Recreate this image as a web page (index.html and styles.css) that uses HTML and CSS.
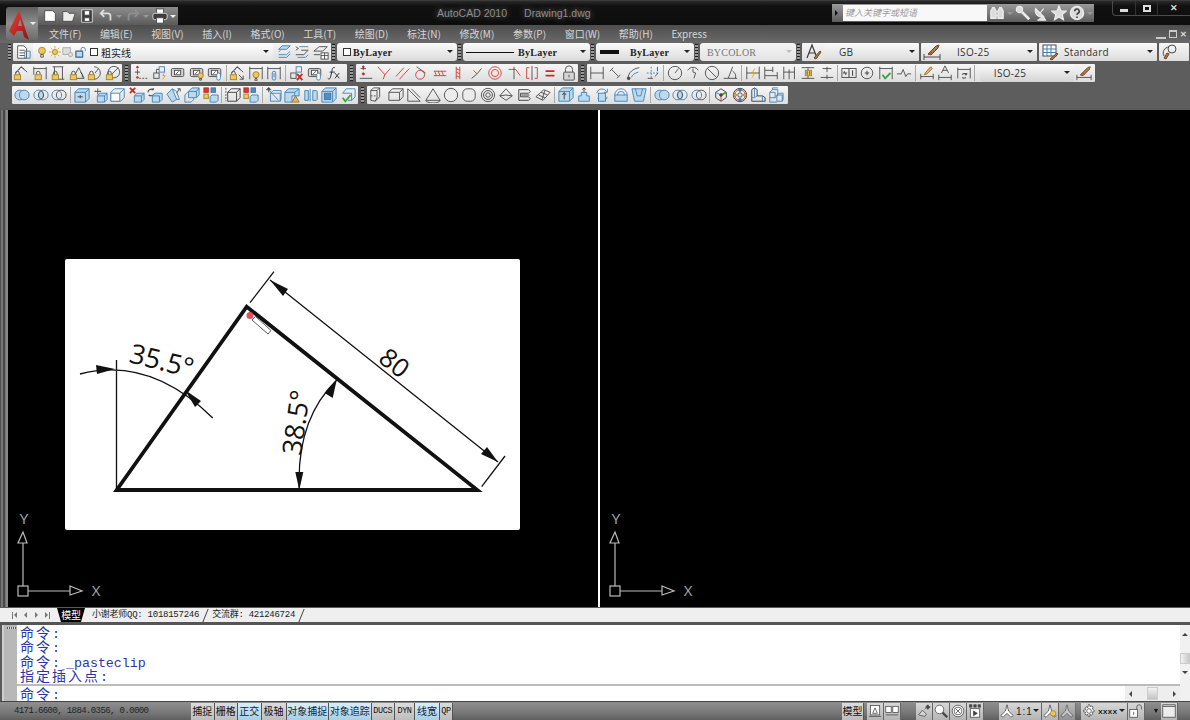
FILE: index.html
```html
<!DOCTYPE html>
<html lang="zh">
<head>
<meta charset="utf-8">
<title>AutoCAD 2010 - Drawing1.dwg</title>
<link rel="stylesheet" href="styles.css">
</head>
<body>
<svg class="defs" aria-hidden="true">
<defs><linearGradient id="redA" x1="0" y1="0" x2="1" y2="1"><stop offset="0" stop-color="#e8443a"/><stop offset="1" stop-color="#8f1512"/></linearGradient></defs>
<symbol id="lk" viewBox="0 0 18 18"><path d="M3 11V9a2 2 0 0 1 4 0v2"/><rect class="fy" x="1.5" y="11" width="7" height="5.5"/></symbol>
<symbol id="bulb" viewBox="0 0 18 18"><circle class="fy" cx="11" cy="10" r="3.5"/><path d="M10 14h2v3h-2z"/></symbol>
<symbol id="clip" viewBox="0 0 18 18"><rect class="bl" x="9" y="7" width="4" height="10" rx="2"/><path class="bl" d="M11 9v5"/></symbol>
<symbol id="dl" viewBox="0 0 18 18"><path d="M3 9 9 2l7 6M6 6l3-4 4 3"/><use href="#lk"/></symbol>
<symbol id="dh" viewBox="0 0 18 18"><path d="M2 2v9M16 2v14M2 4h14"/><use href="#lk" x="2"/></symbol>
<symbol id="dv" viewBox="0 0 18 18"><path d="M3 2h12M9 16h7M5 2v14"/><path d="M14 2v14"/><use href="#lk" x="1"/></symbol>
<symbol id="da" viewBox="0 0 18 18"><path d="M5 14 11 3l6 12H9M13 8a6 6 0 0 1 2 6"/><use href="#lk"/></symbol>
<symbol id="dr" viewBox="0 0 18 18"><path d="M8 2a7 7 0 1 1 0 14M9 9l4-5"/><use href="#lk"/></symbol>
<symbol id="dd" viewBox="0 0 18 18"><circle cx="10" cy="8" r="6.5"/><path d="m5 13 10-10"/><use href="#lk"/></symbol>
<symbol id="ord" viewBox="0 0 18 18"><circle class="fr" cx="5" cy="2.5" r="1"/><circle class="fr" cx="5" cy="14" r="1"/><path d="M5 5v6M2 8h6"/><path class="dash" d="M7 15h9"/></symbol>
<symbol id="blk" viewBox="0 0 18 18"><rect class="bl" x="8" y="2" width="6" height="6"/><rect x="2" y="9" width="6" height="6"/><path d="M8 5H5v4"/><path class="sy" d="m14 9-2 3h3l-3 4"/></symbol>
<symbol id="par" viewBox="0 0 18 18"><rect x="1.5" y="4" width="14" height="9" rx="1.5" class="fg"/><rect x="5" y="6" width="7" height="5" class="fw"/><path d="m7 10 3-3"/></symbol>
<symbol id="parb" viewBox="0 0 18 18"><use href="#par"/><circle class="fy" cx="13" cy="12" r="3"/><path d="M12 15h2v2h-2z"/></symbol>
<symbol id="parc" viewBox="0 0 18 18"><use href="#par"/><rect class="bl fw" x="11" y="9" width="4" height="8" rx="2"/></symbol>
<symbol id="dla" viewBox="0 0 18 18"><path d="M3 9 9 2l7 6M6 6l3-4 4 3M11 11l5 5M16 12v4h-4"/><use href="#lk"/></symbol>
<symbol id="dhb" viewBox="0 0 18 18"><path d="M2 2v14M16 2v14M2 4h14"/><use href="#bulb" x="-2" y="1"/></symbol>
<symbol id="dhc" viewBox="0 0 18 18"><path d="M2 2v14M16 2v14M2 4h14"/><use href="#clip" x="-2"/></symbol>
<symbol id="blx" viewBox="0 0 18 18"><rect class="bl" x="8" y="2" width="6" height="6"/><rect x="2" y="9" width="6" height="6"/><path class="r2" d="m9 10 6 7M15 10l-6 7"/></symbol>
<symbol id="fx" viewBox="0 0 18 18"><path d="M10 3C7 2 7 5 6.500 8L5 14c-.5 2-2 2-3 1M4 8h6M10 9l5 6M15 9l-5 6" class="th"/></symbol>
<symbol id="cpt" viewBox="0 0 18 18"><path d="M6 1v5M3 4h6M2 15h14"/><circle class="fr" cx="6" cy="2" r="1"/><circle class="fr" cx="6" cy="10" r="1.200"/></symbol>
<symbol id="cper" viewBox="0 0 18 18"><path class="r1" d="m2 2 8 9 6-7M10 11l-2 5"/></symbol>
<symbol id="cpar" viewBox="0 0 18 18"><path class="r1" d="m1 13 9-10M5 16l11-12"/></symbol>
<symbol id="ctan" viewBox="0 0 18 18"><circle class="r1" cx="8" cy="11" r="5"/><path d="m4 2 10 7"/></symbol>
<symbol id="chor" viewBox="0 0 18 18"><path class="r1" d="M2 7h14M2 12h14M3 7l2 5M7 7l2 5M11 7l2 5"/></symbol>
<symbol id="cver" viewBox="0 0 18 18"><path class="r1" d="M7 2v14M11 2v14M7 4l4 2M7 8l4 2M7 12l4 2"/></symbol>
<symbol id="ccol" viewBox="0 0 18 18"><path d="m3 15 6-5M14 4l-5 6"/><path class="r1" d="M5 6l4 4"/></symbol>
<symbol id="ccon" viewBox="0 0 18 18"><circle class="r1" cx="9" cy="9" r="7"/><circle class="r1" cx="9" cy="9" r="4"/></symbol>
<symbol id="ctrm" viewBox="0 0 18 18"><path class="r1" d="M3 5h8l5 7"/><path d="M9 2v8M9 10v6"/></symbol>
<symbol id="csym" viewBox="0 0 18 18"><path class="r1" d="M6 3H3v12h3M12 3h3v12h-3"/><path d="M9 1v16"/></symbol>
<symbol id="ceq" viewBox="0 0 18 18"><path class="r2" d="M4 7h10M4 12h10"/></symbol>
<symbol id="lock" viewBox="0 0 18 18"><path d="M5 8V5a4 4 0 0 1 8 0v3"/><rect class="fg" x="3" y="8" width="12" height="9" rx="1"/><path d="M9 11v3"/></symbol>
<symbol id="dlin" viewBox="0 0 18 18"><path d="M2 2v14M16 2v14M2 9h14"/></symbol>
<symbol id="dali" viewBox="0 0 18 18"><path d="m2 7 4-4M10 15l4-4M4 5l8 8"/></symbol>
<symbol id="darc" viewBox="0 0 18 18"><path d="M2 15C3 8 8 4 15 3"/><path class="bl" d="M6 14c1-3 4-5 8-6"/><circle class="fk" cx="3" cy="15" r="1.500"/></symbol>
<symbol id="dord" viewBox="0 0 18 18"><path class="dash bl" d="M7 2v14M2 9h14"/><path d="M3 15h6M14 2v5M11 13l4-4"/></symbol>
<symbol id="drad" viewBox="0 0 18 18"><circle cx="9" cy="9" r="7.500"/><path d="m9 9 4-5"/></symbol>
<symbol id="djog" viewBox="0 0 18 18"><path d="M3 6a7 7 0 0 1 12 0M9 4v4l3 1-2 6"/></symbol>
<symbol id="ddia" viewBox="0 0 18 18"><circle cx="9" cy="9" r="7.500"/><path d="m4 4 10 10"/></symbol>
<symbol id="dang" viewBox="0 0 18 18"><path d="M2 15h15M7 15 12 2M12 7a7 7 0 0 1 3 8"/></symbol>
<symbol id="dq" viewBox="0 0 18 18"><path d="M2 2v14M16 2v14M2 9h14"/><path class="sy" d="m11 4-3 5h3l-3 5"/></symbol>
<symbol id="dbas" viewBox="0 0 18 18"><path d="M2 2v14M2 6h9M11 2v6M2 12h14M16 8v8"/></symbol>
<symbol id="dcon" viewBox="0 0 18 18"><path d="M2 2v14M8 5v11M14 2v14M2 8h12"/></symbol>
<symbol id="dsp" viewBox="0 0 18 18"><path d="M2 3h14M2 15h14M9 3v12"/><rect class="fy" x="6" y="6" width="7" height="6"/><path d="M8 7v4M11 7v4"/></symbol>
<symbol id="dbr" viewBox="0 0 18 18"><path d="M2 14h14M9 2v6M9 11v5M4 4h10"/></symbol>
<symbol id="mk1" viewBox="0 0 18 18"><rect x="1" y="4" width="16" height="10"/><path d="M9 4v10M4 7l-1 2h3l-1 2M5 9h0M13 6v6" class="tk"/></symbol>
<symbol id="cen" viewBox="0 0 18 18"><circle cx="9" cy="9" r="6.500"/><path class="tk" d="M9 6.500v5M6.500 9h5"/></symbol>
<symbol id="chk" viewBox="0 0 18 18"><path d="M2 2v14M16 2v14M2 4h14"/><path class="gr" d="m5 11 3 4 6-6"/></symbol>
<symbol id="djg" viewBox="0 0 18 18"><path d="M1 10h5l2-5 3 8 2-3h4"/></symbol>
<symbol id="ded" viewBox="0 0 18 18"><path d="M2 10v6M16 10v6M2 13h14"/><path class="sb2" d="m7 9 6-7 2 2-6 6-3 1z"/></symbol>
<symbol id="dta" viewBox="0 0 18 18"><path d="M2 11v6M16 11v6M2 14h14M5 9l4-8 4 8M6.500 6h5"/></symbol>
<symbol id="dup" viewBox="0 0 18 18"><path d="M2 3v12M16 3v12M2 5h14"/><path class="tk" d="M7 11a3 3 0 0 1 5 0M12 11v-2M12 11h-2M11 14a3 3 0 0 1-4 0"/></symbol>
<symbol id="dst" viewBox="0 0 18 18"><path d="M1 11v6M17 11v6M1 14h16"/><path class="sb" d="m5 11 8-8 3-1-1 3-7 7z"/><path class="r1" d="M5 12l4-3"/></symbol>
<symbol id="ast" viewBox="0 0 18 18"><path class="dk2 tk" d="M3 15 8 2l5 13M5 10h6"/><path class="sb" d="m10 15 6-7 1 1-5 7z"/></symbol>
<symbol id="tst" viewBox="0 0 18 18"><rect x="2" y="2" width="13" height="11" class="fw"/><path d="M2 6h13M2 9.500h13M6 2v11M10 2v11" class="bl"/><path class="sb" d="m9 16 7-6 1 1-6 6z"/></symbol>
<symbol id="mls" viewBox="0 0 18 18"><path d="M3 13a6 6 0 0 1 5-9"/><circle cx="11" cy="6" r="4"/><path class="bl" d="m8 10-3 5"/><path class="sb" d="m3 15 3-5 2 1-3 5z"/></symbol>
<symbol id="ly2" viewBox="0 0 18 18"><path class="bl fb" d="m3 6 4-4h9l-4 4z"/><path class="bl" d="m3 9 2-2M3 12h9l4-4M3 15h9l4-4"/></symbol>
<symbol id="ly3" viewBox="0 0 18 18"><path d="m2 3 3 2-3 2M2 12h9l5-5H8"/><path class="bl" d="M6 3h10M4 15h9l3-3"/></symbol>
<symbol id="ly4" viewBox="0 0 18 18"><path d="m1 8 6-5h9l-5 5zM1 12h7"/><rect x="9" y="10" width="8" height="7" class="fw"/><path d="M13 10v7M9 13h8"/></symbol>
<symbol id="v1" viewBox="0 0 18 18"><circle class="bl fb" cx="6.500" cy="9" r="5.500"/><circle class="bl fb" cx="11.500" cy="9" r="5.500"/></symbol>
<symbol id="v2" viewBox="0 0 18 18"><circle class="bl" cx="6.500" cy="9" r="5.500"/><circle class="bl" cx="11.500" cy="9" r="5.500"/><path class="fb" d="M9 4.200a5.500 5.500 0 0 1 0 9.600 5.500 5.500 0 0 1 0-9.600z"/></symbol>
<symbol id="v3" viewBox="0 0 18 18"><circle class="bl" cx="6.500" cy="9" r="5.500"/><circle cx="11.500" cy="9" r="5.500"/></symbol>
<symbol id="b1" viewBox="0 0 18 18"><path class="bl fb" d="m1 6 4-4h12v11l-4 4H1z"/><path class="bl" d="M1 6h12l4-4M13 6v11"/><path d="M4 11h6M7 9v4"/></symbol>
<symbol id="b2" viewBox="0 0 18 18"><path d="M3 5h7M6.500 1.500v7M3 5l1-1M10 5 9 4"/><path class="bl fb" d="m6 10 3-3h8v7l-3 3H6z"/><path class="bl" d="M6 10h8v7M14 10l3-3"/></symbol>
<symbol id="b3" viewBox="0 0 18 18"><path class="bl" d="m1 6 4-4h11v10l-4 4H1z"/><path class="bl fw" d="M1 7h10v9H1z"/><path class="bl" d="m11 7 5-5"/></symbol>
<symbol id="b4" viewBox="0 0 18 18"><path class="r2" d="m1 1 6 6M7 1 1 7"/><path class="bl fb" d="m6 10 3-3h8v7l-3 3H6z"/><path class="bl" d="M6 10h8v7M14 10l3-3"/></symbol>
<symbol id="b5" viewBox="0 0 18 18"><path class="tk" d="M1 6a4 4 0 0 1 6-3M7 1v2H5M8 8a4 4 0 0 1-6 1"/><path class="bl fb" d="m6 10 3-3h8v7l-3 3H6z"/><path class="bl" d="M6 10h8v7"/></symbol>
<symbol id="b6" viewBox="0 0 18 18"><path class="bl fb" d="m1 8 6-6 5 12-5 3z"/><path d="m12 7 3-5M13 2h3v3"/><path class="bl" d="m7 2 5 3 3 9-3 0"/></symbol>
<symbol id="b7" viewBox="0 0 18 18"><path class="bl" d="m1 9 3-3h7v8l-3 3H1z"/><path class="bl fb" d="m5 5 4-4h8v8l-3 3H5z"/><path class="bl" d="M5 5h9v7M14 5l3-4"/></symbol>
<symbol id="b8" viewBox="0 0 18 18"><rect class="fr" x="1" y="1" width="5" height="5"/><rect class="fb2" x="9" y="1" width="5" height="5"/><rect class="fy" x="1" y="8" width="5" height="5"/><path class="bl fb" d="m8 11 2-2h7v6l-2 2H8z"/></symbol>
<symbol id="b9" viewBox="0 0 18 18"><path class="dk2" d="M3 16V6l4-4h10v10l-4 4zM3 6h10v10M13 6l4-4"/><path class="dash" d="M1 1v15"/></symbol>
<symbol id="b10" viewBox="0 0 18 18"><circle class="fk" cx="3" cy="2" r="1.200"/><path d="M3 1v5M0 3h6"/><path class="bl" d="m3 3 11 12M5 7h11v9H5zM5 7l3-3h9v9l-1 3"/></symbol>
<symbol id="b11" viewBox="0 0 18 18"><path class="bl fb" d="m1 6 4-4h12v8H9v7H1z"/><path class="bl" d="M1 6h11v4M12 6l5-4"/><path class="sb2 fy" d="m13 10 4 7H9z"/></symbol>
<symbol id="b12" viewBox="0 0 18 18"><path class="bl" d="M8 2v14"/><path class="bl fb" d="M2 4h4v11H2zM11 4h4a2 2 0 0 1 1 1v9l-1 1h-4z"/></symbol>
<symbol id="b13" viewBox="0 0 18 18"><path class="bl fb" d="m1 5 4-4h12v12l-4 4H1z"/><rect class="bl fb2" x="4" y="7" width="7" height="7"/><path class="bl" d="M1 5h12v12M13 5l4-4"/></symbol>
<symbol id="b14" viewBox="0 0 18 18"><path class="bl" d="M3 7 7 2h10v9l-4 4H9"/><path class="bl" d="M3 7h10v8"/><path class="gr" d="m3 12 3 4 6-7"/></symbol>
<symbol id="s1" viewBox="0 0 18 18"><path d="m2 4 3-3h7v10l-5 5-5-1zM2 4h7l3-3M9 4v8l-2 4"/><path class="dash" d="M2 10h7"/></symbol>
<symbol id="s2" viewBox="0 0 18 18"><path d="M1 6l4-4h12v9l-4 4H1zM1 6h12v9M13 6l4-4"/></symbol>
<symbol id="s3" viewBox="0 0 18 18"><path d="M2 16V2l14 14zM6 2l10 10"/></symbol>
<symbol id="s4" viewBox="0 0 18 18"><path d="M1 15 9 2l8 13zM1 15a8 3 0 0 0 16 0"/></symbol>
<symbol id="s5" viewBox="0 0 18 18"><circle cx="9" cy="9" r="7.500" class="fl"/></symbol>
<symbol id="s6" viewBox="0 0 18 18"><rect x="2" y="2" width="14" height="14" rx="5" class="fl"/></symbol>
<symbol id="s7" viewBox="0 0 18 18"><circle cx="9" cy="9" r="7.500"/><circle cx="9" cy="9" r="5" class="dk2"/><circle cx="9" cy="9" r="2.500"/></symbol>
<symbol id="s8" viewBox="0 0 18 18"><path d="m9 2-7 8 7 5 7-5zM2 10l7-1 7 1"/></symbol>
<symbol id="s9" viewBox="0 0 18 18"><path class="dk2" d="M2 3h11l2 2-2 2H4v4h9l2 2-2 2H2zM5 9h9"/></symbol>
<symbol id="s10" viewBox="0 0 18 18"><path d="m1 11 9-8 7 3-8 9zM4 9l7 3M7 6l7 3M8 14l3-10"/></symbol>
<symbol id="e1" viewBox="0 0 18 18"><path class="bl fb" d="m1 5 4-4h12v11l-4 4H1z"/><path class="bl" d="M1 5h12v11M13 5l4-4"/><path class="dk2" d="M7 14V7M5 9l2-3 2 3"/></symbol>
<symbol id="e2" viewBox="0 0 18 18"><path class="bl fb" d="M3 16v-6h3V6h6v4h3v6z"/><path class="dk2" d="M9 6V1M7 3l2-2 2 2"/></symbol>
<symbol id="e3" viewBox="0 0 18 18"><path class="bl" d="M3 7a6 6 0 0 1 11-2M15 2v4h-4M15 11a6 6 0 0 1-11 2"/><rect class="bl fb" x="5" y="7" width="8" height="9"/></symbol>
<symbol id="e4" viewBox="0 0 18 18"><path class="bl" d="M2 9a7 7 0 0 1 14 0M5 9a4 4 0 0 1 8 0"/><path class="bl fb" d="M2 9h14v7H2z"/></symbol>
<symbol id="e5" viewBox="0 0 18 18"><path class="bl fb" d="M1 2h16l-3 14H4z"/><path class="bl" d="M5 2l2 8h4l2-8"/></symbol>
<symbol id="m1" viewBox="0 0 18 18"><path class="dk2" d="m3 12 6 4 6-4V6L9 2 3 6z"/><path class="r1" d="M9 9v7"/><path class="bl" d="M9 9 3 6"/><path class="gr" d="m9 9 6-3"/><circle class="fk" cx="9" cy="9" r="1.500"/></symbol>
<symbol id="m2" viewBox="0 0 18 18"><circle cx="9" cy="9" r="7.500" class="dk2"/><circle class="r1" cx="9" cy="9" r="6"/><circle class="fb2" cx="9" cy="3.500" r="1.500"/><circle class="fb2" cx="9" cy="14.500" r="1.500"/><circle class="fy" cx="3.500" cy="9" r="1.500"/><circle class="fy" cx="14.500" cy="9" r="1.500"/><circle cx="9" cy="9" r="2.500"/></symbol>
<symbol id="m3" viewBox="0 0 18 18"><path class="dk2" d="M2 16V3l3-2 3 2v7h6l3 2v4z"/><path class="bl" d="M5 1v10M8 10l-3 2H2M14 10v6"/></symbol>
<symbol id="m4" viewBox="0 0 18 18"><path class="bl" d="M2 6h6v6H2zM2 6l3-3h6v6l-3 3M5 3V1h6M10 9h6v7h-6zM10 9l2-2h5v7l-1 2M2 12v5h8"/></symbol>
<symbol id="bin" viewBox="0 0 18 18"><path class="w" d="M2 15V7l2-4h2l2 4v8zM10 15V7l2-4h2l2 4v8z"/><path class="w" d="M8 7h2M8 12h2"/></symbol>
<symbol id="key" viewBox="0 0 18 18"><circle class="w" cx="5" cy="5" r="3.500"/><path class="w wt" d="m8 8 8 8"/></symbol>
<symbol id="sat" viewBox="0 0 18 18"><path class="w" d="M3 4a7 7 0 0 0 9 9zM8 9l4-5M5 17h9l-3-5"/></symbol>
<symbol id="star" viewBox="0 0 18 18"><path class="w" d="m9 1 2.200 5.500 6 .4-4.600 3.800 1.500 5.800L9 13.400l-5.100 3.100 1.500-5.800L.8 6.900l6-.4z"/></symbol>
<symbol id="help" viewBox="0 0 18 18"><circle class="w" cx="9" cy="9" r="7.500"/><path class="qm" d="M6.500 7a2.500 2.500 0 1 1 3.500 2.300c-1 .5-1 1-1 2M9 13v1.500"/></symbol>
<symbol id="st1" viewBox="0 0 18 18"><rect class="fw" x="3" y="2" width="12" height="12"/><path d="m6 12 3-7 3 7zM1 16h16"/></symbol>
<symbol id="st2" viewBox="0 0 18 18"><rect class="fw" x="1" y="3" width="7" height="8"/><rect class="fw" x="10" y="3" width="7" height="8"/><path d="M1 14h16"/></symbol>
<symbol id="st3" viewBox="0 0 18 18"><path class="fg" d="m2 14 5-6 5 5-2 3z"/><path d="m10 7 4-4M12 2l4 3"/><path class="fk" d="M14 1l1 2 2 1-2 1-1 2-1-2-2-1 2-1z"/></symbol>
<symbol id="st4" viewBox="0 0 18 18"><circle class="fw" cx="7" cy="7" r="5.500"/><path class="wt" d="m11 11 6 6"/></symbol>
<symbol id="st5" viewBox="0 0 18 18"><circle cx="9" cy="9" r="7.500" class="fw"/><circle cx="9" cy="9" r="5"/><path d="m6 6 6 6M12 6l-6 6"/></symbol>
<symbol id="st6" viewBox="0 0 18 18"><rect class="fw" x="3" y="6" width="12" height="11"/><rect class="fk" x="2" y="1" width="3" height="3"/><rect class="fk" x="7.500" y="1" width="3" height="3"/><rect class="fk" x="13" y="1" width="3" height="3"/><path class="fk" d="m7 9 5 3-5 3z"/></symbol>
<symbol id="anno" viewBox="0 0 18 18"><path class="fw" d="M9 1 7 9l-6 6 3 2 5-5 5 5 3-2-6-6z"/></symbol>
<symbol id="anb" viewBox="0 0 18 18"><use href="#anno"/><circle class="fy" cx="13" cy="12" r="3.500"/></symbol>
<symbol id="gear" viewBox="0 0 18 18"><path class="fw" d="m8 1h2l.5 2.500 2.300-1 1.500 1.500-1 2.300L15.500 8v2l-2.700.5 1 2.300-1.500 1.500-2.300-1L10 16H8l-.5-2.700-2.300 1-1.500-1.500 1-2.300L2 10V8l2.700-.5-1-2.300 1.500-1.500 2.300 1z"/><circle cx="9" cy="9" r="3"/></symbol>
<symbol id="unlk" viewBox="0 0 18 18"><rect class="fw" x="1" y="7" width="10" height="10"/><path d="M6 10v4M10 7V4a3 3 0 0 1 6 0v3"/></symbol>
<symbol id="win" viewBox="0 0 18 18"><rect class="fl" x="1" y="1" width="16" height="16"/><path class="tk" d="M1 3h16"/></symbol>
<symbol id="qn" viewBox="0 0 18 18"><path class="fw" d="M3 3h9l3 3v9H3z"/></symbol>
<symbol id="qo" viewBox="0 0 18 18"><path class="fl" d="M2 15V4h5l2 2h7l-3 9z"/></symbol>
<symbol id="qs" viewBox="0 0 18 18"><path class="fdk" d="M3 2h12v14H3z"/><rect class="fw" x="6" y="3" width="6" height="5"/><rect class="fw" x="6" y="11" width="6" height="4"/></symbol>
<symbol id="qu" viewBox="0 0 18 18"><path class="qa" d="M14 14V9a3 3 0 0 0-3-3H3M7 2 3 6l4 4"/></symbol>
<symbol id="qr" viewBox="0 0 18 18"><path class="qb" d="M4 14V9a3 3 0 0 1 3-3h8M11 2l4 4-4 4"/></symbol>
<symbol id="qp" viewBox="0 0 18 18"><rect class="fw" x="5" y="1" width="8" height="5"/><rect class="fdk" x="1" y="6" width="16" height="7" rx="2"/><rect class="fw" x="5" y="11" width="8" height="6"/></symbol>
<symbol id="lay" viewBox="0 0 18 18"><path class="fw" d="M3 2h7l3 3v11H3z"/><path d="M5 7h6M5 10h6M5 13h6"/><path class="bl" d="M11 8h6v8h-6z"/></symbol>
<symbol id="bup" viewBox="0 0 14 14"><circle class="fy" cx="7" cy="5.500" r="4"/><path d="M5.500 10h3v3h-3z"/></symbol>
<symbol id="sun" viewBox="0 0 14 14"><circle class="fy" cx="7" cy="7" r="3"/><path class="sy" d="M7 0v3M7 11v3M0 7h3M11 7h3M2 2l2 2M10 10l2 2M2 12l2-2M10 4l2-2"/></symbol>
<symbol id="frz" viewBox="0 0 14 14"><rect class="gy" x="1" y="2" width="9" height="8"/><circle class="gy" cx="10" cy="10" r="2.500"/></symbol>
<symbol id="opn" viewBox="0 0 14 14"><rect class="fb" x="1" y="6" width="8" height="7"/><path class="bl" d="M7 6V4a2.500 2.500 0 0 1 5 0v2"/><path class="bl" d="M1 6h8v7H1z"/></symbol>
</svg>

<header class="titlebar">
  <button class="app" aria-label="AutoCAD">
    <svg class="app-logo" viewBox="0 0 32 33"><path d="M3 24 13 3l10 30-5-3-1.500-6H11l-3 5z" fill="url(#redA)" stroke="none"/><path d="M12 19h4l-2-7z" fill="#8a8a8a" stroke="none"/></svg>
    <span class="app-arrow"></span>
  </button>
  <div class="qat">
    <svg class="q"><use href="#qn"/></svg><svg class="q"><use href="#qo"/></svg><svg class="q"><use href="#qs"/></svg><svg class="q"><use href="#qu"/></svg><i class="dn dim"></i><svg class="q"><use href="#qr"/></svg><i class="dn dim"></i><svg class="q"><use href="#qp"/></svg><i class="dn"></i>
  </div>
  <div class="doc"><span class="app-name">AutoCAD 2010</span><span class="file-name">Drawing1.dwg</span></div>
  <div class="search">
    <i class="rt"></i>
    <div class="search-input">键入关键字或短语</div>
    <svg class="q"><use href="#bin"/></svg><i class="dn dim"></i><svg class="q"><use href="#key"/></svg><svg class="q"><use href="#sat"/></svg><svg class="q"><use href="#star"/></svg><svg class="q"><use href="#help"/></svg><i class="dn dim"></i>
  </div>
  <div class="winctl"><span class="wb"><b class="wmin"></b></span><span class="wb"><b class="wmax"></b></span><span class="wb wx">✕</span></div>
</header>

<nav class="menubar">
  <span>文件(F)</span><span>编辑(E)</span><span>视图(V)</span><span>插入(I)</span><span>格式(O)</span><span>工具(T)</span><span>绘图(D)</span><span>标注(N)</span><span>修改(M)</span><span>参数(P)</span><span>窗口(W)</span><span>帮助(H)</span><span>Express</span>
  <div class="mdi"><b class="mmin"></b><b class="mmax"></b><span class="mx">✕</span></div>
</nav>

<section class="bars">
  <div class="row row1">
    <i class="grip"></i>
    <div class="grp g-layer">
      <svg class="i c-lay"><use href="#lay"/></svg>
      <div class="combo c-layer">
        <svg class="m"><use href="#bup"/></svg><svg class="m"><use href="#sun"/></svg><svg class="m"><use href="#frz"/></svg><svg class="m"><use href="#opn"/></svg><i class="sq"></i><span class="layer-name">粗实线</span><i class="dk"></i>
      </div>
      <svg class="i"><use href="#ly2"/></svg><svg class="i"><use href="#ly3"/></svg><svg class="i"><use href="#ly4"/></svg>
    </div>
    <i class="grip"></i>
    <div class="combo c-color"><i class="sq"></i><span class="bl-t">ByLayer</span><i class="dk"></i></div>
    <i class="grip"></i>
    <div class="combo c-ltype"><i class="ln"></i><span class="bl-t">ByLayer</span><i class="dk"></i></div>
    <i class="grip"></i>
    <div class="combo c-lw"><i class="ln thick"></i><span class="bl-t">ByLayer</span><i class="dk"></i></div>
    <i class="grip"></i>
    <div class="combo c-plot"><span class="bl-d">BYCOLOR</span><i class="dk off"></i></div>
    <i class="grip"></i>
    <div class="grp g-sty"><svg class="i wide"><use href="#ast"/></svg><div class="combo c-st1"><span class="nm nm-gb">GB</span><i class="dk"></i></div></div>
    <div class="grp g-sty"><svg class="i wide"><use href="#dst"/></svg><div class="combo c-st2"><span class="nm nm-iso">ISO-25</span><i class="dk"></i></div></div>
    <div class="grp g-sty"><svg class="i wide"><use href="#tst"/></svg><div class="combo c-st3"><span class="nm">Standard</span><i class="dk"></i></div></div>
    <div class="grp g-sty last"><svg class="i wide"><use href="#mls"/></svg><span class="sliver"></span></div>
  </div>

  <div class="row row2">
    <div class="grp first">
      <svg class="i"><use href="#dl"/></svg><svg class="i"><use href="#dh"/></svg><svg class="i"><use href="#dv"/></svg><svg class="i"><use href="#da"/></svg><svg class="i"><use href="#dr"/></svg><svg class="i"><use href="#dd"/></svg>
    </div>
    <i class="grip"></i>
    <div class="grp g2">
      <svg class="i"><use href="#ord"/></svg><svg class="i"><use href="#blk"/></svg><svg class="i"><use href="#par"/></svg><svg class="i"><use href="#parb"/></svg><svg class="i"><use href="#parc"/></svg><i class="sep"></i>
      <svg class="i"><use href="#dla"/></svg><svg class="i"><use href="#dhb"/></svg><svg class="i"><use href="#dhc"/></svg><i class="sep"></i>
      <svg class="i"><use href="#blx"/></svg><svg class="i"><use href="#parc"/></svg><svg class="i"><use href="#fx"/></svg>
    </div>
    <i class="grip"></i>
    <div class="grp">
      <svg class="i"><use href="#cpt"/></svg><svg class="i"><use href="#cper"/></svg><svg class="i"><use href="#cpar"/></svg><svg class="i"><use href="#ctan"/></svg><svg class="i"><use href="#chor"/></svg><svg class="i"><use href="#cver"/></svg><svg class="i"><use href="#ccol"/></svg><svg class="i"><use href="#ccon"/></svg><svg class="i"><use href="#ctrm"/></svg><svg class="i"><use href="#csym"/></svg><svg class="i"><use href="#ceq"/></svg><svg class="i"><use href="#lock"/></svg>
    </div>
    <i class="grip"></i>
    <div class="grp g4">
      <svg class="i"><use href="#dlin"/></svg><svg class="i"><use href="#dali"/></svg><svg class="i"><use href="#darc"/></svg><svg class="i"><use href="#dord"/></svg><i class="sep"></i>
      <svg class="i"><use href="#drad"/></svg><svg class="i"><use href="#djog"/></svg><svg class="i"><use href="#ddia"/></svg><svg class="i"><use href="#dang"/></svg><i class="sep"></i>
      <svg class="i"><use href="#dq"/></svg><svg class="i"><use href="#dbas"/></svg><svg class="i"><use href="#dcon"/></svg><svg class="i"><use href="#dsp"/></svg><svg class="i"><use href="#dbr"/></svg><i class="sep"></i>
      <svg class="i"><use href="#mk1"/></svg><svg class="i"><use href="#cen"/></svg><svg class="i"><use href="#chk"/></svg><svg class="i"><use href="#djg"/></svg><i class="sep"></i>
      <svg class="i"><use href="#ded"/></svg><svg class="i"><use href="#dta"/></svg><svg class="i"><use href="#dup"/></svg><i class="sep"></i>
      <div class="combo c-dim"><span class="nm">ISO-25</span><i class="dk"></i></div>
      <svg class="i"><use href="#dst"/></svg>
    </div>
  </div>

  <div class="row row3">
    <div class="grp first">
      <svg class="i"><use href="#v1"/></svg><svg class="i"><use href="#v2"/></svg><svg class="i"><use href="#v3"/></svg><i class="sep"></i>
      <svg class="i"><use href="#b1"/></svg><svg class="i"><use href="#b2"/></svg><svg class="i"><use href="#b3"/></svg><svg class="i"><use href="#b4"/></svg><svg class="i"><use href="#b5"/></svg><svg class="i"><use href="#b6"/></svg><svg class="i"><use href="#b7"/></svg><svg class="i"><use href="#b8"/></svg><i class="sep"></i>
      <svg class="i"><use href="#b9"/></svg><svg class="i"><use href="#b8"/></svg><i class="sep"></i>
      <svg class="i"><use href="#b10"/></svg><svg class="i"><use href="#b11"/></svg><svg class="i"><use href="#b12"/></svg><svg class="i"><use href="#b13"/></svg><svg class="i"><use href="#b14"/></svg>
    </div>
    <i class="grip"></i>
    <div class="grp g6">
      <svg class="i"><use href="#s1"/></svg><svg class="i"><use href="#s2"/></svg><svg class="i"><use href="#s3"/></svg><svg class="i"><use href="#s4"/></svg><svg class="i"><use href="#s5"/></svg><svg class="i"><use href="#s6"/></svg><svg class="i"><use href="#s7"/></svg><svg class="i"><use href="#s8"/></svg><svg class="i"><use href="#s9"/></svg><svg class="i"><use href="#s10"/></svg><i class="sep"></i>
      <svg class="i"><use href="#e1"/></svg><svg class="i"><use href="#e2"/></svg><svg class="i"><use href="#e3"/></svg><svg class="i"><use href="#e4"/></svg><svg class="i"><use href="#e5"/></svg><i class="sep"></i>
      <svg class="i"><use href="#v1"/></svg><svg class="i"><use href="#v2"/></svg><svg class="i"><use href="#v3"/></svg><i class="sep"></i>
      <svg class="i"><use href="#m1"/></svg><svg class="i"><use href="#m2"/></svg><svg class="i"><use href="#m3"/></svg><svg class="i"><use href="#m4"/></svg>
    </div>
  </div>
</section>

<main class="views">
  <svg class="view left" viewBox="8 110 590 497">
    <defs>
      <g id="ucs">
        <path d="M23 586V543M28 591H70M23 532l-5 11h9zM70 586l12 5-12 4z"/>
        <rect x="18" y="586" width="10" height="10"/>
        <text x="24" y="524" class="ucs-t">Y</text>
        <text x="96" y="596" class="ucs-t">X</text>
      </g>
    </defs>
    <rect class="paper" x="65" y="259" width="455" height="271" rx="2"/>
    <path class="thin" d="M116.500 360V490M250 302.700 274 271.700M481.700 486.700 505 456M270 280 498 462M80 374Q150 356 212.700 418M299.300 490Q296 420 336.700 380"/>
    <path class="fat" d="M116.700 490 246.700 306.700 477.300 490Z"/>
    <path class="head" d="M270 280l18 9-5 7zM498 462l-17-8 6-7zM115 369l-19-4 1 9zM185 390l16 11-6 6zM299.300 490l-4-18h8zM336.700 380l-4 18-8-5z"/>
    <circle class="snap" cx="250" cy="315.500" r="3.500"/>
    <path class="pencil" d="M252 320l3.500-3.500 15.500 14-3 3.500z"/>
    <text class="dimt" transform="translate(128 362) rotate(14)">35.5°</text>
    <text class="dimt" transform="translate(301 456) rotate(-82)">38.5°</text>
    <text class="dimt d80" transform="translate(377 361) rotate(38)">80</text>
    <use href="#ucs" class="ucs"/>
  </svg>
  <svg class="view right" viewBox="8 110 590 497">
    <use href="#ucs" class="ucs"/>
  </svg>
</main>

<div class="tabs">
  <span class="nav"><i class="bar"></i><i class="tl"></i></span><span class="nav"><i class="tl"></i></span><span class="nav"><i class="tr"></i></span><span class="nav"><i class="tr"></i><i class="bar"></i></span>
  <span class="tab active">模型</span>
  <span class="tab t1">小谢老师QQ: 1018157246</span>
  <span class="tab t2">交流群: 421246724</span>
</div>

<section class="cmd">
  <div class="cmd-grip"><i></i></div>
  <div class="cmd-body">
    <div class="cmd-hist">
      <div class="line"><span class="cj">命令</span>:</div>
      <div class="line"><span class="cj">命令</span>:</div>
      <div class="line"><span class="cj">命令</span>: _pasteclip</div>
      <div class="line"><span class="cj">指定插入点</span>:</div>
    </div>
    <div class="cmd-in">
      <div class="line"><span class="cj">命令</span>:</div>
      <div class="hscroll"><i class="al"></i><b></b><i class="ar"></i></div>
    </div>
  </div>
  <div class="vscroll"><i class="au"></i><b></b><i class="ad"></i></div>
</section>

<footer class="status">
  <span class="coords">4171.6600, 1884.0356, 0.0000</span>
  <span class="tg w1">捕捉</span><span class="tg w1">栅格</span><span class="tg w1 on">正交</span><span class="tg w2">极轴</span><span class="tg w3 on">对象捕捉</span><span class="tg w3 on">对象追踪</span><span class="tg en w1">DUCS</span><span class="tg en w4">DYN</span><span class="tg w2 on">线宽</span><span class="tg en w5">QP</span>
  <div class="st-right">
    <span class="tg w6">模型</span>
    <span class="sb-i first-b"><svg class="si"><use href="#st1"/></svg></span><span class="sb-i"><svg class="si"><use href="#st2"/></svg></span>
    <span class="gap"></span>
    <span class="sb-i"><svg class="si"><use href="#st3"/></svg></span><span class="sb-i"><svg class="si"><use href="#st4"/></svg></span><span class="sb-i"><svg class="si"><use href="#st5"/></svg></span><span class="sb-i"><svg class="si"><use href="#st6"/></svg></span>
    <span class="gap"></span>
    <span class="sb-w ann"><svg class="si"><use href="#anno"/></svg><em>1:1</em><i class="dk"></i></span>
    <span class="sb-i"><svg class="si"><use href="#anb"/></svg></span><span class="sb-i off-i"><svg class="si"><use href="#anno"/></svg></span>
    <span class="gap small"></span>
    <span class="sb-w ws"><svg class="si"><use href="#gear"/></svg><em class="xx">xxxx</em><i class="dk"></i></span>
    <span class="sb-i"><svg class="si"><use href="#unlk"/></svg></span>
    <i class="dk st-dk"></i>
    <span class="sb-i"><svg class="si"><use href="#win"/></svg></span>
  </div>
</footer>
</body>
</html>
```

FILE: styles.css
```css
* { box-sizing: border-box; }
html, body { margin: 0; padding: 0; }
body {
  width: 1190px; height: 720px; overflow: hidden; position: relative;
  display: flex; flex-direction: column;
  background: #5a5a5a;
  font-family: "Noto Sans CJK SC", "Liberation Sans", sans-serif;
}
i, b, em { font-style: normal; display: block; }
.defs { width: 0; height: 0; position: absolute; }

/* SVG icon paint */
svg { fill: none; stroke: #4a4a4a; stroke-width: 1; overflow: visible; flex: none; }
.bl { stroke: #3f82b8; } .fb { fill: #bcd9ee; } .fb2 { fill: #4f8fc4; stroke: #3f72a0; }
.fy { fill: #eec763; stroke: #a78322; } .sy { stroke: #d8a422; } .fw { fill: #fff; } .fg { fill: #d4d4d4; } .fl { fill: #ececec; }
.fr { fill: #d6392f; stroke: #b52a22; } .fk { fill: #444; } .r1 { stroke: #cf3a30; } .r2 { stroke: #cf2a20; stroke-width: 2; }
.gr { stroke: #3ea53a; stroke-width: 2; } .tk { stroke-width: 1.200; } .dk2 { stroke: #3a3a3a; } .dash { stroke-dasharray: 2 1.500; }
.sb { fill: #a77a48; stroke: #70492a; } .sb2 { fill: #e3b76a; stroke: #9a6f2d; } .th { stroke: #222; }
.gy { stroke: #aaa; fill: #ddd; } .w { stroke: #eee; fill: #dcdcdc; stroke-width: 1.300; } .wt { stroke-width: 3; }
.qm { stroke: #444; stroke-width: 1.800; }
.fdk { fill: #3d3d3d; stroke: #ddd; } .qa { stroke: #ddd; stroke-width: 2; } .qb { stroke: #8f8f8f; stroke-width: 2; }

/* Title bar */
.titlebar { height: 25px; flex: none; display: flex; background: linear-gradient(#2b2b2b, #111 20%, #0d0d0d); border-top: 1px solid #3a3a3a; position: relative; }
.app {
  position: absolute; left: 6px; top: 6px; width: 32px; height: 33px; padding: 0; border: 0; z-index: 3;
  border-radius: 3px 0 3px 3px;
  background: linear-gradient(#5f5f5f, #8f8f8f 50%, #6c6c6c);
}
.app-logo { position: absolute; left: 0; top: 0; width: 32px; height: 33px; }
.app-arrow { position: absolute; right: 2px; top: 15px; border: 3px solid transparent; border-top-color: #eee; border-bottom: 0; }
.qat {
  margin: 6px 0 0 38px; width: 140px; height: 18px; padding-left: 4px;
  display: flex; align-items: center; gap: 2.500px;
  background: linear-gradient(#8d8d8d, #5a5a5a);
}
.q { width: 16px; height: 16px; }
.dn { border: 3px solid transparent; border-top-color: #eee; border-bottom: 0; flex: none; }
.dn.dim { border-top-color: #999; }
.doc { margin-left: 259px; width: 395px; display: flex; align-items: center; height: 23px; gap: 17px; font: 10.500px "Liberation Sans", sans-serif; color: #8e8e8e; text-shadow: 0 0 6px #777; }
.search {
  position: absolute; left: 832px; top: 3px; width: 262px; height: 18px;
  display: flex; align-items: center; gap: 2px; padding-left: 3px;
  background: linear-gradient(#9a9a9a, #5d5d5d);
}
.rt { border: 3px solid transparent; border-left-color: #111; border-right: 0; flex: none; }
.search-input { width: 144px; flex: none; height: 16px; margin: 0 0 0 3px; padding-left: 2px; background: #f8f8f8; color: #999; font-size: 9px; line-height: 16px; font-style: italic; }
.winctl { position: absolute; left: 1112px; top: 0; width: 78px; height: 15px; display: flex; border: 1px solid #4c4c4c; border-top: 0; border-right: 0; border-radius: 0 0 0 4px; }
.wb { display: flex; align-items: center; justify-content: center; height: 14px; width: 23px; border-right: 1px solid #333; color: #ddd; }
.wb.wx { width: 32px; border: 0; font: bold 9px "Liberation Sans", sans-serif; }
.wmin { width: 8px; height: 3px; background: #ddd; margin-top: 4px; }
.wmax { width: 8px; height: 7px; border: 2px solid #ddd; }

/* Menu */
.menubar {
  height: 18px; flex: none; display: flex; align-items: center; gap: 18.600px; padding-left: 49px;
  background: linear-gradient(#4d4d4d, #6a6a6a); color: #d6d6d6; font-size: 10px; line-height: 18px; position: relative;
}
.menubar > span { white-space: nowrap; }
.mdi { position: absolute; right: 0; top: 4px; display: flex; align-items: center; gap: 3px; color: #ddd; }
.mmin { width: 10px; height: 2px; background: #ccc; margin-top: 8px; }
.mmax { width: 8px; height: 8px; border: 1px solid #ccc; border-top-width: 2px; }
.mx { font: bold 8px "Liberation Sans", sans-serif; width: 10px; }

/* Toolbars */
.bars { height: 65px; flex: none; background: #5d5d5d; display: flex; flex-direction: column; }
.row { display: flex; align-items: center; padding-left: 7px; height: 18px; }
.row2 { margin-top: 3px; padding-left: 12px; }
.row3 { margin-top: 4px; padding-left: 12px; }
.grp { display: flex; align-items: center; height: 100%; background: linear-gradient(#f6f6f6, #dedede); border-radius: 1px; padding: 0 0 0 1px; flex: none; }
.row2 .first { width: 110px; padding: 0; }
.row3 .first { width: 346px; }
.g2 { padding-right: 4px; }
.g4 { padding-right: 2px; }
.g6 { padding-right: 2px; }
.grip { width: 5px; height: 16px; margin: 0 2px; flex: none; background: repeating-linear-gradient(#222 0 1px, #999 1px 3px); border: 1px solid #5d5d5d; border-width: 0 1px; }
.row1 .grip { margin: 0 1px 0 0; }
.i { width: 16px; height: 16px; margin: 0 1.225px; }
.sep { width: 1px; height: 16px; background: #aaa; margin: 0 1.500px; flex: none; }
.combo { height: 100%; flex: none; display: flex; align-items: center; position: relative; border-radius: 3px; background: linear-gradient(#fbfbfb, #dadada); font: 9px "Liberation Mono", monospace; color: #222; }
.dk { position: absolute; right: 4px; top: 7px; border: 3px solid transparent; border-top-color: #222; border-bottom: 0; border-left-width: 3.500px; border-right-width: 3.500px; }
.dk.off { border-top-color: #bbb; }
.sq { width: 8px; height: 8px; border: 1px solid #333; background: #fff; flex: none; }
.g-layer { width: 318px; padding: 0; }
.c-lay { margin: 0 2px; }
.c-layer { width: 240px; margin: 0 1.500px 0 0; padding-left: 3px; background: linear-gradient(#fff, #e4e4e4); }
.m { width: 12px; height: 12px; margin-right: 1px; }
.c-layer .sq { margin: 0 3px 0 2px; }
.layer-name { font: 10px "Noto Sans CJK SC", sans-serif; }
.bl-t { font: bold 10px "Liberation Serif", serif; letter-spacing: .3px; }
.c-color { width: 120px; padding-left: 6px; }
.c-color .sq { margin-right: 2px; }
.c-ltype { width: 127px; padding-left: 3px; }
.ln { width: 48px; height: 1px; background: #111; margin-right: 4px; flex: none; }
.c-lw { width: 98px; padding-left: 4px; }
.ln.thick { width: 19px; height: 4px; margin-right: 11px; }
.c-plot { width: 96px; padding-left: 7px; background: linear-gradient(#f4f4f4, #e4e4e4); }
.bl-d { font: 10px "Liberation Serif", serif; letter-spacing: .2px; color: #777; }
.g-sty { padding: 0; margin-right: 2px; }
.wide { width: 18px; height: 18px; margin: 0 2px; }
.nm { font: 10px "Open Sans", sans-serif; letter-spacing: .3px; color: #333; }
.nm-gb { margin-left: 15px; }
.nm-iso { margin-left: 14px; }
.c-st1 { width: 95px; } .c-st2 { width: 94px; } .c-st3 { width: 96px; padding-left: 3px; }
.last { margin-right: 0; }
.sliver { width: 8px; }
.c-dim { width: 94px; margin: 0 1px 0 3px; justify-content: flex-start; padding-left: 14px; background: linear-gradient(#fbfbfb, #d4d4d4); }

/* Views */
.views { height: 497px; flex: none; margin-top: 2px; display: flex; padding-left: 8px; background: linear-gradient(90deg, #3a3a3a, #8a8a8a 2px, #333 4px, #888 6px, #888 8px, #fff 8px); }
.view { background: #000; display: block; height: 497px; }
.left { width: 590px; }
.right { width: 590px; margin-left: 2px; }
.paper { fill: #fff; stroke: none; }
.thin { stroke: #111; stroke-width: 1.300; fill: none; }
.fat { stroke: #111; stroke-width: 3.800; fill: none; }
.head { fill: #111; stroke: none; }
.snap { fill: #e0323f; stroke: none; opacity: .85; }
.pencil { fill: #fff; stroke: #333; stroke-width: .8; }
.dimt { font: 27px "Open Sans", sans-serif; fill: #111; stroke: none; }
.d80 { font-size: 26px; }
.ucs { stroke: #bbb; fill: none; stroke-width: 1.200; }
.ucs-t { font: 15px "Open Sans", sans-serif; fill: #aaa; stroke: none; text-anchor: middle; }

/* Tabs */
.tabs { height: 14px; flex: none; margin-top: 1px; background: #efefef; display: flex; align-items: center; padding-left: 9px; font: 9px "Liberation Mono", monospace; color: #222; overflow: hidden; }
.nav { width: 11px; height: 10px; flex: none; display: flex; align-items: center; justify-content: center; gap: 1px; }
.bar { width: 1px; height: 7px; background: #777; }
.tl { border: 3px solid transparent; border-left: 0; border-right-color: #777; border-top-width: 3.500px; border-bottom-width: 3.500px; }
.tr { border: 3px solid transparent; border-right: 0; border-left-color: #777; border-top-width: 3.500px; border-bottom-width: 3.500px; }
.tab { display: block; height: 14px; line-height: 14px; position: relative; white-space: nowrap; letter-spacing: -.25px; flex: none; font-family: "Liberation Mono", "Noto Sans CJK SC", monospace; }
.t1 { margin-left: 7px; padding-right: 13px; }
.t2 { padding-right: 13px; }
.t1::after, .t2::after { content: ""; position: absolute; right: 6px; top: 1px; width: 1px; height: 13px; background: #444; transform: skewX(-22deg); }
.tab.active { background: #000; color: #fff; margin-left: 4px; width: 28px; text-align: center; font-family: "Noto Sans CJK SC", sans-serif; font-size: 10px; clip-path: polygon(0 0, 100% 0, calc(100% - 4px) 100%, 4px 100%); }

/* Command */
.cmd { height: 79px; flex: none; display: flex; background: #fff; border-top: 3px solid #555; }
.cmd-grip { width: 17px; background: linear-gradient(90deg, #5b5b5b 0 2px, #cfcfcf 2px 4px, #b8b8b8 4px); padding: 2px 0 0 7px; flex: none; }
.cmd-grip i { width: 9px; height: 2px; background: repeating-linear-gradient(90deg, #555 0 1px, #ddd 1px 2px); }
.cmd-body { flex: 1; display: flex; flex-direction: column; min-width: 0; }
.line { height: 14.300px; font: 13.300px/14.300px "Liberation Mono", monospace; color: #2c36a6; padding-left: 3px; white-space: nowrap; word-spacing: -2px; }
.cj { display: inline-block; height: 14.300px; font: 14px/14.300px "Noto Sans CJK SC", sans-serif; letter-spacing: 2px; }
.cmd-hist { height: 59px; flex: none; }
.cmd-in { height: 17px; flex: none; border-top: 2px solid #bbb; display: flex; justify-content: space-between; align-items: center; }
.hscroll { width: 55px; height: 15px; background: #eee; position: relative; display: flex; align-items: center; justify-content: space-between; padding: 0 4px; }
.hscroll b { width: 11px; height: 13px; background: linear-gradient(#f2f2f2, #c4c4c4); border: 1px solid #ccc; }
.al { border: 3px solid transparent; border-left: 0; border-right-color: #444; }
.ar { border: 3px solid transparent; border-right: 0; border-left-color: #444; }
.vscroll { width: 10px; background: #f1f1f1; display: flex; flex-direction: column; align-items: center; padding: 8px 0 0; flex: none; }
.vscroll b { width: 10px; height: 11px; margin-top: 17px; background: linear-gradient(90deg, #f2f2f2, #c8c8c8); border: 1px solid #ccc; }
.au { border: 3px solid transparent; border-top: 0; border-bottom-color: #444; }
.ad { border: 3px solid transparent; border-bottom: 0; border-top-color: #444; margin-top: 7px; }

/* Status */
.status { height: 19px; flex: none; display: flex; align-items: center; background: linear-gradient(#8f8f8f, #777 60%, #5f5f5f); border-top: 1px solid #444; padding-left: 14px; }
.coords { width: 177px; font: 9px "Liberation Mono", monospace; color: #222; letter-spacing: -.6px; flex: none; }
.tg { height: 17px; line-height: 16px; text-align: center; font-size: 10px; color: #111; background: linear-gradient(#dcdcdc, #bdbdbd); border-right: 1px solid #555; flex: none; white-space: nowrap; }
.tg.on { background: linear-gradient(#d8eefa, #a7cfe6); color: #123; }
.w1 { width: 23.500px; } .w2 { width: 25px; } .w3 { width: 42.500px; } .w4 { width: 20px; } .w5 { width: 13px; } .w6 { width: 22px; }
.en { font: 8.500px/17px "Liberation Mono", monospace; letter-spacing: -.4px; }
.st-right { margin-left: auto; display: flex; align-items: center; height: 18px; padding-right: 12px; }
.sb-i { width: 17px; height: 17px; background: linear-gradient(#d8d8d8, #b4b4b4); display: flex; align-items: center; justify-content: center; flex: none; border-right: 1px solid #666; }
.first-b { margin-left: 3px; }
.off-i { opacity: .6; }
.si { width: 14px; height: 14px; }
.gap { width: 15px; flex: none; }
.gap.small { width: 5px; }
.sb-w { height: 17px; background: linear-gradient(#d8d8d8, #b4b4b4); display: flex; align-items: center; position: relative; flex: none; border-right: 1px solid #666; padding-left: 1px; }
.sb-w .dk { top: 6px; right: 2px; }
.ann { width: 43px; } .ws { width: 47px; }
.sb-w em { font: 10px "Liberation Sans", sans-serif; letter-spacing: 1px; margin-left: 2px; color: #222; }
.sb-w em.xx { font: bold 8px "Liberation Mono", monospace; letter-spacing: 0; }
.st-dk { position: static; margin: 0 3px 0 9px; border-top-color: #111; border-left-width: 2.500px; border-right-width: 2.500px; border-top-width: 4px; }
```
